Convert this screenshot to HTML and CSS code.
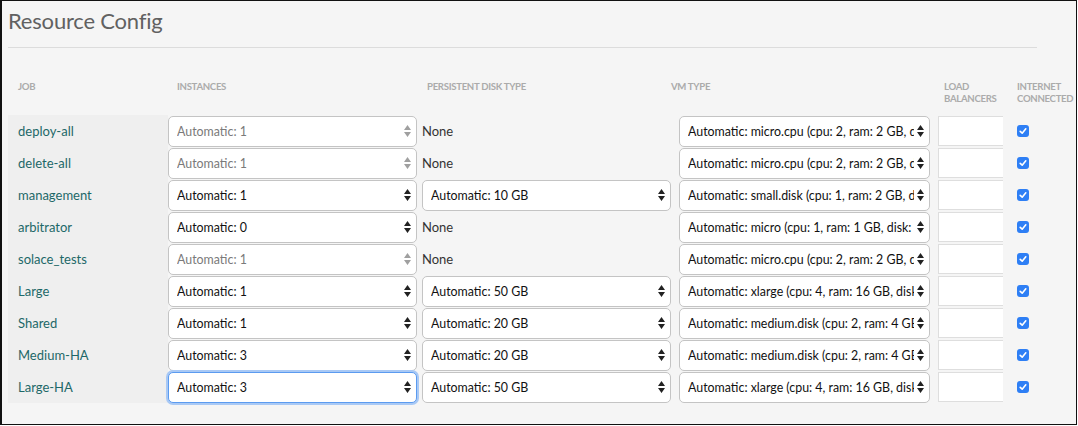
FILE: index.html
```html
<!DOCTYPE html>
<html>
<head>
<meta charset="utf-8">
<link rel="stylesheet" href="styles.css">
</head>
<body>
<div class="page">
  <h1 class="title">Resource Config</h1>
  <div class="rule"></div>
  <div class="grid">
    <div class="hd h1">JOB</div>
    <div class="hd h2">INSTANCES</div>
    <div class="hd h3">PERSISTENT DISK TYPE</div>
    <div class="hd h4">VM TYPE</div>
    <div class="hd h5">LOAD<br>BALANCERS</div>
    <div class="hd h6">INTERNET<br>CONNECTED</div>

    <div class="job">deploy-all</div>
    <div class="c2"><div class="sel dis"><span class="txt">Automatic: 1</span><svg class="arr" viewBox="0 0 7 12" width="7" height="12"><path d="M0 5L3.5 0L7 5Z M0 7L3.5 12L7 7Z"/></svg></div></div>
    <div class="c3"><span class="none">None</span></div>
    <div class="c4"><div class="sel vm"><span class="txt">Automatic: micro.cpu (cpu: 2, ram: 2 GB, disk: 8 GB)</span><svg class="arr" viewBox="0 0 7 12" width="7" height="12"><path d="M0 5L3.5 0L7 5Z M0 7L3.5 12L7 7Z"/></svg></div></div>
    <div class="c5"><div class="lb"></div></div>
    <div class="c6"><span class="cb"><svg viewBox="0 0 12 12" width="12" height="12"><path d="M3.2 6.3L5.2 8.2L8.8 3.8" fill="none" stroke="#fff" stroke-width="1.6" stroke-linecap="round" stroke-linejoin="round"/></svg></span></div>

    <div class="job">delete-all</div>
    <div class="c2"><div class="sel dis"><span class="txt">Automatic: 1</span><svg class="arr" viewBox="0 0 7 12" width="7" height="12"><path d="M0 5L3.5 0L7 5Z M0 7L3.5 12L7 7Z"/></svg></div></div>
    <div class="c3"><span class="none">None</span></div>
    <div class="c4"><div class="sel vm"><span class="txt">Automatic: micro.cpu (cpu: 2, ram: 2 GB, disk: 8 GB)</span><svg class="arr" viewBox="0 0 7 12" width="7" height="12"><path d="M0 5L3.5 0L7 5Z M0 7L3.5 12L7 7Z"/></svg></div></div>
    <div class="c5"><div class="lb"></div></div>
    <div class="c6"><span class="cb"><svg viewBox="0 0 12 12" width="12" height="12"><path d="M3.2 6.3L5.2 8.2L8.8 3.8" fill="none" stroke="#fff" stroke-width="1.6" stroke-linecap="round" stroke-linejoin="round"/></svg></span></div>

    <div class="job">management</div>
    <div class="c2"><div class="sel"><span class="txt">Automatic: 1</span><svg class="arr" viewBox="0 0 7 12" width="7" height="12"><path d="M0 5L3.5 0L7 5Z M0 7L3.5 12L7 7Z"/></svg></div></div>
    <div class="c3"><div class="sel disk"><span class="txt">Automatic: 10 GB</span><svg class="arr" viewBox="0 0 7 12" width="7" height="12"><path d="M0 5L3.5 0L7 5Z M0 7L3.5 12L7 7Z"/></svg></div></div>
    <div class="c4"><div class="sel vm"><span class="txt">Automatic: small.disk (cpu: 1, ram: 2 GB, disk: 8 GB)</span><svg class="arr" viewBox="0 0 7 12" width="7" height="12"><path d="M0 5L3.5 0L7 5Z M0 7L3.5 12L7 7Z"/></svg></div></div>
    <div class="c5"><div class="lb"></div></div>
    <div class="c6"><span class="cb"><svg viewBox="0 0 12 12" width="12" height="12"><path d="M3.2 6.3L5.2 8.2L8.8 3.8" fill="none" stroke="#fff" stroke-width="1.6" stroke-linecap="round" stroke-linejoin="round"/></svg></span></div>

    <div class="job">arbitrator</div>
    <div class="c2"><div class="sel"><span class="txt">Automatic: 0</span><svg class="arr" viewBox="0 0 7 12" width="7" height="12"><path d="M0 5L3.5 0L7 5Z M0 7L3.5 12L7 7Z"/></svg></div></div>
    <div class="c3"><span class="none">None</span></div>
    <div class="c4"><div class="sel vm"><span class="txt">Automatic: micro (cpu: 1, ram: 1 GB, disk: 8 GB)</span><svg class="arr" viewBox="0 0 7 12" width="7" height="12"><path d="M0 5L3.5 0L7 5Z M0 7L3.5 12L7 7Z"/></svg></div></div>
    <div class="c5"><div class="lb"></div></div>
    <div class="c6"><span class="cb"><svg viewBox="0 0 12 12" width="12" height="12"><path d="M3.2 6.3L5.2 8.2L8.8 3.8" fill="none" stroke="#fff" stroke-width="1.6" stroke-linecap="round" stroke-linejoin="round"/></svg></span></div>

    <div class="job">solace_tests</div>
    <div class="c2"><div class="sel dis"><span class="txt">Automatic: 1</span><svg class="arr" viewBox="0 0 7 12" width="7" height="12"><path d="M0 5L3.5 0L7 5Z M0 7L3.5 12L7 7Z"/></svg></div></div>
    <div class="c3"><span class="none">None</span></div>
    <div class="c4"><div class="sel vm"><span class="txt">Automatic: micro.cpu (cpu: 2, ram: 2 GB, disk: 8 GB)</span><svg class="arr" viewBox="0 0 7 12" width="7" height="12"><path d="M0 5L3.5 0L7 5Z M0 7L3.5 12L7 7Z"/></svg></div></div>
    <div class="c5"><div class="lb"></div></div>
    <div class="c6"><span class="cb"><svg viewBox="0 0 12 12" width="12" height="12"><path d="M3.2 6.3L5.2 8.2L8.8 3.8" fill="none" stroke="#fff" stroke-width="1.6" stroke-linecap="round" stroke-linejoin="round"/></svg></span></div>

    <div class="job">Large</div>
    <div class="c2"><div class="sel"><span class="txt">Automatic: 1</span><svg class="arr" viewBox="0 0 7 12" width="7" height="12"><path d="M0 5L3.5 0L7 5Z M0 7L3.5 12L7 7Z"/></svg></div></div>
    <div class="c3"><div class="sel disk"><span class="txt">Automatic: 50 GB</span><svg class="arr" viewBox="0 0 7 12" width="7" height="12"><path d="M0 5L3.5 0L7 5Z M0 7L3.5 12L7 7Z"/></svg></div></div>
    <div class="c4"><div class="sel vm"><span class="txt">Automatic: xlarge (cpu: 4, ram: 16 GB, disk: 32 GB)</span><svg class="arr" viewBox="0 0 7 12" width="7" height="12"><path d="M0 5L3.5 0L7 5Z M0 7L3.5 12L7 7Z"/></svg></div></div>
    <div class="c5"><div class="lb"></div></div>
    <div class="c6"><span class="cb"><svg viewBox="0 0 12 12" width="12" height="12"><path d="M3.2 6.3L5.2 8.2L8.8 3.8" fill="none" stroke="#fff" stroke-width="1.6" stroke-linecap="round" stroke-linejoin="round"/></svg></span></div>

    <div class="job">Shared</div>
    <div class="c2"><div class="sel"><span class="txt">Automatic: 1</span><svg class="arr" viewBox="0 0 7 12" width="7" height="12"><path d="M0 5L3.5 0L7 5Z M0 7L3.5 12L7 7Z"/></svg></div></div>
    <div class="c3"><div class="sel disk"><span class="txt">Automatic: 20 GB</span><svg class="arr" viewBox="0 0 7 12" width="7" height="12"><path d="M0 5L3.5 0L7 5Z M0 7L3.5 12L7 7Z"/></svg></div></div>
    <div class="c4"><div class="sel vm"><span class="txt">Automatic: medium.disk (cpu: 2, ram: 4 GB, disk: 32 GB)</span><svg class="arr" viewBox="0 0 7 12" width="7" height="12"><path d="M0 5L3.5 0L7 5Z M0 7L3.5 12L7 7Z"/></svg></div></div>
    <div class="c5"><div class="lb"></div></div>
    <div class="c6"><span class="cb"><svg viewBox="0 0 12 12" width="12" height="12"><path d="M3.2 6.3L5.2 8.2L8.8 3.8" fill="none" stroke="#fff" stroke-width="1.6" stroke-linecap="round" stroke-linejoin="round"/></svg></span></div>

    <div class="job">Medium-HA</div>
    <div class="c2"><div class="sel"><span class="txt">Automatic: 3</span><svg class="arr" viewBox="0 0 7 12" width="7" height="12"><path d="M0 5L3.5 0L7 5Z M0 7L3.5 12L7 7Z"/></svg></div></div>
    <div class="c3"><div class="sel disk"><span class="txt">Automatic: 20 GB</span><svg class="arr" viewBox="0 0 7 12" width="7" height="12"><path d="M0 5L3.5 0L7 5Z M0 7L3.5 12L7 7Z"/></svg></div></div>
    <div class="c4"><div class="sel vm"><span class="txt">Automatic: medium.disk (cpu: 2, ram: 4 GB, disk: 32 GB)</span><svg class="arr" viewBox="0 0 7 12" width="7" height="12"><path d="M0 5L3.5 0L7 5Z M0 7L3.5 12L7 7Z"/></svg></div></div>
    <div class="c5"><div class="lb"></div></div>
    <div class="c6"><span class="cb"><svg viewBox="0 0 12 12" width="12" height="12"><path d="M3.2 6.3L5.2 8.2L8.8 3.8" fill="none" stroke="#fff" stroke-width="1.6" stroke-linecap="round" stroke-linejoin="round"/></svg></span></div>

    <div class="job">Large-HA</div>
    <div class="c2"><div class="sel focus"><span class="txt">Automatic: 3</span><svg class="arr" viewBox="0 0 7 12" width="7" height="12"><path d="M0 5L3.5 0L7 5Z M0 7L3.5 12L7 7Z"/></svg></div></div>
    <div class="c3"><div class="sel disk"><span class="txt">Automatic: 50 GB</span><svg class="arr" viewBox="0 0 7 12" width="7" height="12"><path d="M0 5L3.5 0L7 5Z M0 7L3.5 12L7 7Z"/></svg></div></div>
    <div class="c4"><div class="sel vm"><span class="txt">Automatic: xlarge (cpu: 4, ram: 16 GB, disk: 32 GB)</span><svg class="arr" viewBox="0 0 7 12" width="7" height="12"><path d="M0 5L3.5 0L7 5Z M0 7L3.5 12L7 7Z"/></svg></div></div>
    <div class="c5"><div class="lb"></div></div>
    <div class="c6"><span class="cb"><svg viewBox="0 0 12 12" width="12" height="12"><path d="M3.2 6.3L5.2 8.2L8.8 3.8" fill="none" stroke="#fff" stroke-width="1.6" stroke-linecap="round" stroke-linejoin="round"/></svg></span></div>
  </div>
</div>
</body>
</html>
```

FILE: styles.css
```css
* { box-sizing: border-box; }
html, body { margin: 0; padding: 0; }
body {
  width: 1078px;
  height: 426px;
  font-family: "Lato", "Open Sans", sans-serif;
  background: #fff;
}
.page {
  width: 1077px;
  height: 425px;
  border: 1px solid #111;
  border-left-width: 2px;
  background: #f5f5f5;
  padding: 0 0 0 6px;
  overflow: hidden;
}
.title {
  margin: 0;
  padding-top: 5px;
  height: 46px;
  font-size: 22px;
  font-weight: 400;
  color: #616161;
  line-height: 30px;
  letter-spacing: -0.2px;
}
.rule {
  width: 1029px;
  height: 1px;
  background: #dcdcdc;
}
.grid {
  margin-top: 27px;
  display: grid;
  grid-template-columns: 160px 252px 251px 263px 74px 62px;
  grid-template-rows: 40px repeat(9, 32px);
}
.hd {
  font-size: 9.6px;
  font-weight: 700;
  color: #ababab;
  line-height: 12px;
  padding-top: 6px;
  letter-spacing: -0.3px;
}
.h1 { padding-left: 10px; }
.h2 { padding-left: 9px; }
.h3 { padding-left: 7px; }
.h4 { padding-left: 0; }
.h5 { padding-left: 10px; }
.h6 { padding-left: 9px; }
.job {
  background: #efefef;
  color: #1d6868;
  font-size: 13px;
  padding-left: 10px;
  display: flex;
  align-items: center;
  padding-bottom: 1px;
}
.c2, .c3, .c4, .c5, .c6 {
  display: flex;
  align-items: center;
}
.c3 { padding-left: 2px; }
.c4 { padding-left: 8px; }
.c5 { padding-left: 4px; }
.c6 { padding-left: 9px; }
.sel {
  width: 249px;
  height: 31px;
  background: #fff;
  border: 1px solid #c4c4c4;
  border-radius: 5px;
  display: flex;
  align-items: center;
  padding: 0 5px 0 8px;
  font-size: 12.4px;
  color: #111;
  gap: 3px;
}
.sel.vm { width: 251px; padding-left: 8px; font-size: 12.4px; }
.txt {
  flex: 1;
  white-space: nowrap;
  overflow: hidden;
}
.arr { flex: none; fill: #222; }
.sel.dis { color: #7a7a7a; }
.sel.dis .arr { fill: #a0a0a0; }
.sel.focus {
  border: 1px solid #5b9bf0;
  box-shadow: 0 0 0 2px #a9c9f5;
}
.none {
  font-size: 13px;
  color: #333;
}
.lb {
  width: 65px;
  height: 30px;
  background: #fff;
  border: 1px solid #dedede;
  border-right: none;
}
.cb {
  width: 12px;
  height: 12px;
  border-radius: 3px;
  background: #2e7ff5;
  display: block;
}
.cb svg { display: block; }
```
